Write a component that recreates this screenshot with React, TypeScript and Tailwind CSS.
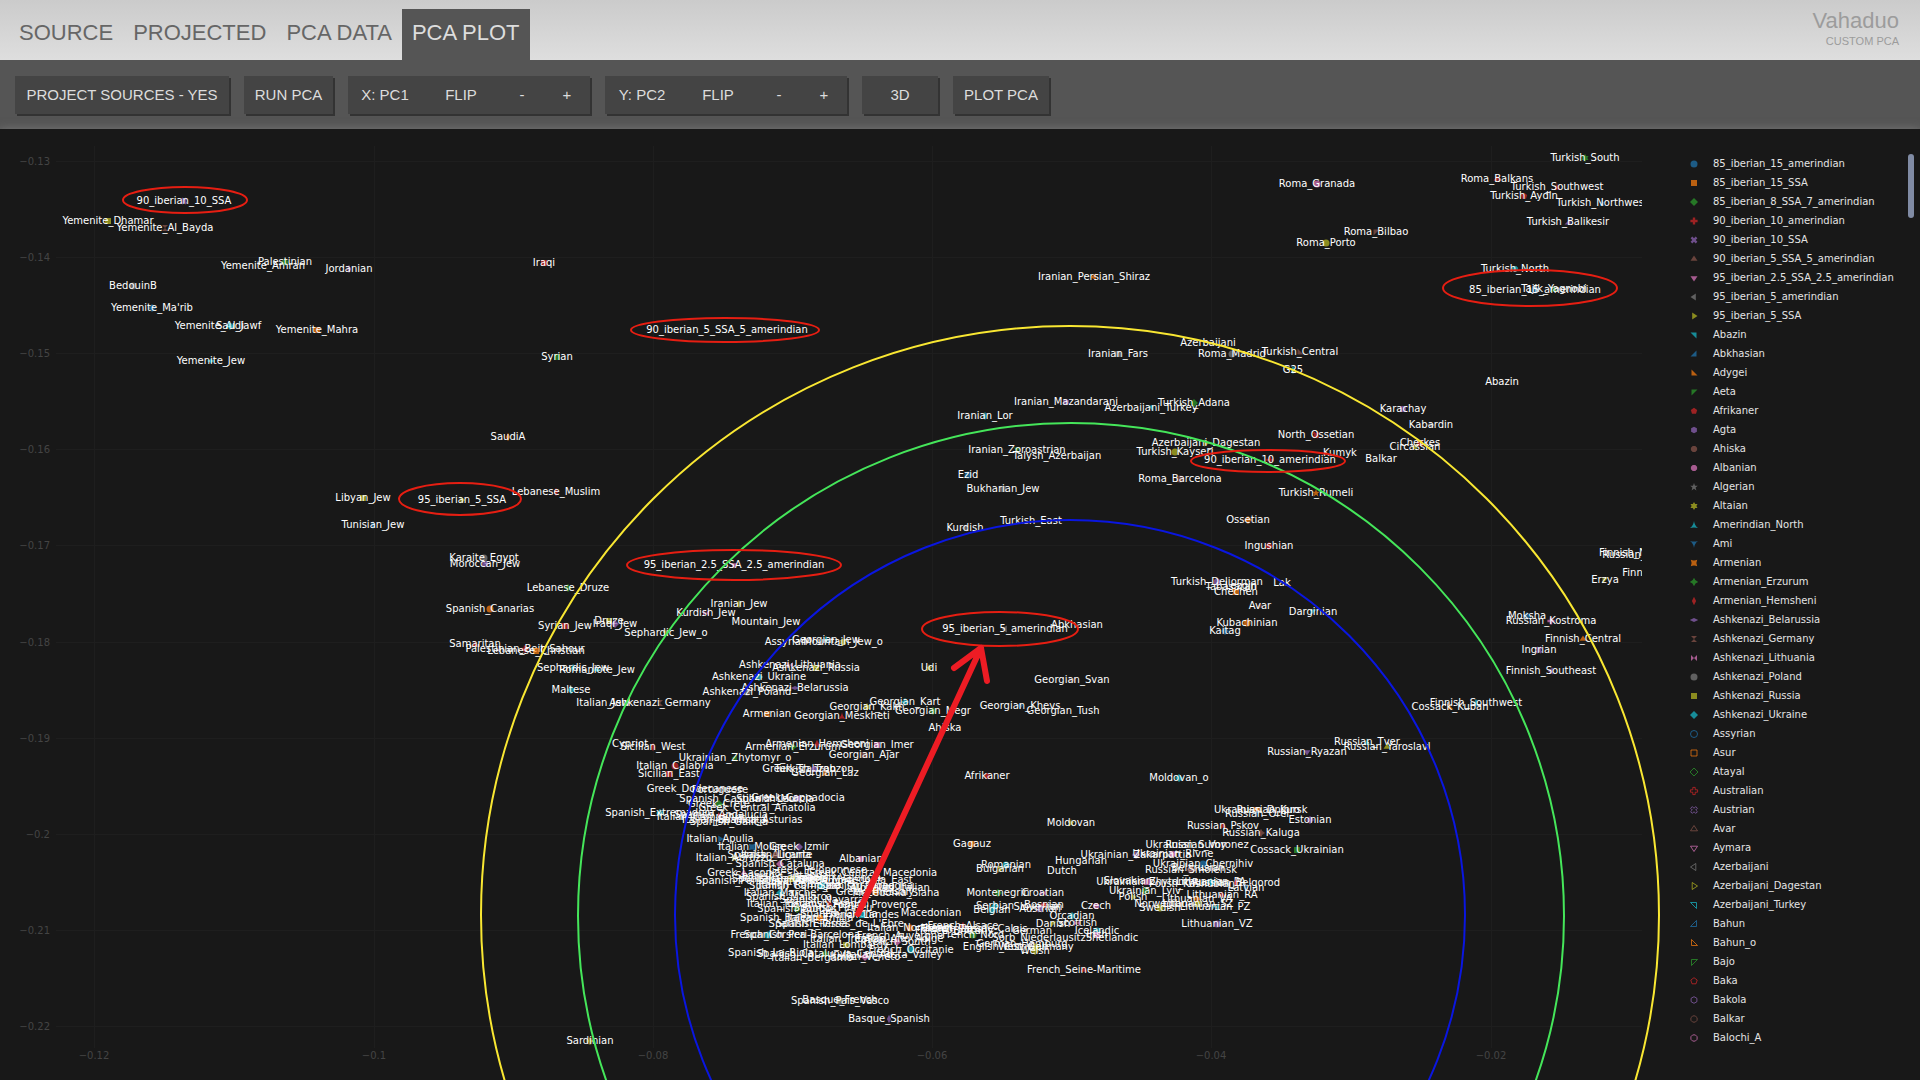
import clsx from "clsx";

type Label = [x: number, y: number, text: string, symbol?: string, color?: number];

const COLORS = [
  "#1f77b4",
  "#ff7f0e",
  "#2ca02c",
  "#d62728",
  "#9467bd",
  "#8c564b",
  "#e377c2",
  "#7f7f7f",
  "#bcbd22",
  "#17becf",
];

const SYMBOLS: Record<string, string> = {
  circle: "M3.5,0A3.5,3.5 0 1,1 -3.5,0A3.5,3.5 0 1,1 3.5,0Z",
  square: "M-3,-3H3V3H-3Z",
  diamond: "M0,-4L4,0L0,4L-4,0Z",
  cross: "M-1.2,-3.6H1.2V-1.2H3.6V1.2H1.2V3.6H-1.2V1.2H-3.6V-1.2H-1.2Z",
  x: "M0,-1.7L1.7,-3.4L3.4,-1.7L1.7,0L3.4,1.7L1.7,3.4L0,1.7L-1.7,3.4L-3.4,1.7L-1.7,0L-3.4,-1.7L-1.7,-3.4Z",
  up: "M-3.5,1.8H3.5L0,-3.5Z",
  down: "M-3.5,-1.8H3.5L0,3.5Z",
  left: "M1.8,-3.5V3.5L-3.5,0Z",
  right: "M-1.8,-3.5V3.5L3.5,0Z",
  ne: "M-3.5,-2.5H2.5V3.5Z",
  se: "M2.5,-3.5V2.5H-3.5Z",
  sw: "M3.5,2.5H-2.5V-3.5Z",
  nw: "M-2.5,3.5V-2.5H3.5Z",
  pentagon: "M0,-3.3L3.2,-1L2,2.8H-2L-3.2,-1Z",
  hexagon: "M0,-3.3L2.9,-1.7V1.7L0,3.3L-2.9,1.7V-1.7Z",
  octagon: "M-1.3,-3.1H1.3L3.1,-1.3V1.3L1.3,3.1H-1.3L-3.1,1.3V-1.3Z",
  star: "M0,-4L1,-1.2H3.8L1.6,0.6L2.4,3.4L0,1.8L-2.4,3.4L-1.6,0.6L-3.8,-1.2H-1Z",
  hexagram: "M0,-4L1.2,-2H3.5L2.4,0L3.5,2H1.2L0,4L-1.2,2H-3.5L-2.4,0L-3.5,-2H-1.2Z",
  starUp: "M0,-4Q0.6,0.6 4,3Q0,1.8 -4,3Q-0.6,0.6 0,-4Z",
  starDown: "M0,4Q0.6,-0.6 4,-3Q0,-1.8 -4,-3Q-0.6,-0.6 0,4Z",
  starSquare: "M-3.2,-3.2Q0,-1.6 3.2,-3.2Q1.6,0 3.2,3.2Q0,1.6 -3.2,3.2Q-1.6,0 -3.2,-3.2Z",
  starDiamond: "M0,-4.2Q0.9,-0.9 4.2,0Q0.9,0.9 0,4.2Q-0.9,0.9 -4.2,0Q-0.9,-0.9 0,-4.2Z",
  tall: "M0,-4.2L2.1,0L0,4.2L-2.1,0Z",
  wide: "M0,-2.1L4.2,0L0,2.1L-4.2,0Z",
  hourglass: "M-3,-3H3L0,0L3,3H-3L0,0Z",
  bowtie: "M-3,-3V3L0,0L3,3V-3L0,0Z",
};

const LEGEND: [name: string, symbol: string, open?: boolean][] = [
  ["85_iberian_15_amerindian", "circle"],
  ["85_iberian_15_SSA", "square"],
  ["85_iberian_8_SSA_7_amerindian", "diamond"],
  ["90_iberian_10_amerindian", "cross"],
  ["90_iberian_10_SSA", "x"],
  ["90_iberian_5_SSA_5_amerindian", "up"],
  ["95_iberian_2.5_SSA_2.5_amerindian", "down"],
  ["95_iberian_5_amerindian", "left"],
  ["95_iberian_5_SSA", "right"],
  ["Abazin", "ne"],
  ["Abkhasian", "se"],
  ["Adygei", "sw"],
  ["Aeta", "nw"],
  ["Afrikaner", "pentagon"],
  ["Agta", "hexagon"],
  ["Ahiska", "octagon"],
  ["Albanian", "octagon"],
  ["Algerian", "star"],
  ["Altaian", "hexagram"],
  ["Amerindian_North", "starUp"],
  ["Ami", "starDown"],
  ["Armenian", "starSquare"],
  ["Armenian_Erzurum", "starDiamond"],
  ["Armenian_Hemsheni", "tall"],
  ["Ashkenazi_Belarussia", "wide"],
  ["Ashkenazi_Germany", "hourglass"],
  ["Ashkenazi_Lithuania", "bowtie"],
  ["Ashkenazi_Poland", "circle"],
  ["Ashkenazi_Russia", "square"],
  ["Ashkenazi_Ukraine", "diamond"],
  ["Assyrian", "circle", true],
  ["Asur", "square", true],
  ["Atayal", "diamond", true],
  ["Australian", "cross", true],
  ["Austrian", "x", true],
  ["Avar", "up", true],
  ["Aymara", "down", true],
  ["Azerbaijani", "left", true],
  ["Azerbaijani_Dagestan", "right", true],
  ["Azerbaijani_Turkey", "ne", true],
  ["Bahun", "se", true],
  ["Bahun_o", "sw", true],
  ["Bajo", "nw", true],
  ["Baka", "pentagon", true],
  ["Bakola", "hexagon", true],
  ["Balkar", "octagon", true],
  ["Balochi_A", "octagon", true],
];

const LABELS: Label[] = [
  [184, 204, "90_iberian_10_SSA", "x", 4],
  [108, 224, "Yemenite_Dhamar", "square", 8],
  [165, 231, "Yemenite_Al_Bayda", "hourglass", 5],
  [263, 269, "Yemenite_Amran"],
  [285, 265, "Palestinian", "diamond", 2],
  [349, 272, "Jordanian", "tall", 4],
  [544, 266, "Iraqi", "square", 3],
  [133, 289, "BedouinB", "circle", 7],
  [152, 311, "Yemenite_Ma'rib", "diamond", 0],
  [218, 329, "Yemenite_Al_Jawf"],
  [230, 329, "Saudi", "diamond", 9],
  [317, 333, "Yemenite_Mahra", "square", 1],
  [211, 364, "Yemenite_Jew", "wide", 9],
  [557, 360, "Syrian", "square", 2],
  [727, 333, "90_iberian_5_SSA_5_amerindian"],
  [1094, 280, "Iranian_Persian_Shiraz", "left", 1],
  [1118, 357, "Iranian_Fars", "square", 7],
  [1585, 161, "Turkish_South", "hexagram", 2],
  [1497, 182, "Roma_Balkans", "up", 3],
  [1557, 190, "Turkish_Southwest", "starUp", 3],
  [1524, 199, "Turkish_Aydin", "pentagon", 3],
  [1602, 206, "Turkish_Northwest", "star", 0],
  [1568, 225, "Turkish_Balikesir", "se", 4],
  [1317, 187, "Roma_Granada", "circle", 6],
  [1376, 235, "Roma_Bilbao", "nw", 5],
  [1326, 246, "Roma_Porto", "circle", 8],
  [1515, 272, "Turkish_North", "octagon", 9],
  [1535, 293, "85_iberian_15_amerindian", "circle", 0],
  [1554, 292, "Tajik_Yagnobi", "starUp", 2],
  [1300, 355, "Turkish_Central", "sw", 5],
  [508, 440, "SaudiA", "tall", 1],
  [363, 501, "Libyan_Jew", "square", 8],
  [462, 503, "95_iberian_5_SSA", "right", 8],
  [556, 495, "Lebanese_Muslim", "tall", 3],
  [373, 528, "Tunisian_Jew", "tall", 0],
  [484, 561, "Karaite_Egypt", "circle", 7],
  [485, 567, "Moroccan_Jew", "hexagon", 4],
  [568, 591, "Lebanese_Druze", "starDiamond", 2],
  [490, 612, "Spanish_Canarias", "circle", 1],
  [565, 629, "Syrian_Jew", "square", 3],
  [609, 624, "Druze", "square", 8],
  [615, 627, "Iraqi_Jew", "diamond", 4],
  [475, 647, "Samaritan", "starUp", 3],
  [525, 652, "Palestinian_Beit_Sahour", "cross", 3],
  [536, 654, "Lebanese_Christian", "square", 1],
  [573, 671, "Sephardic_Jew", "tall", 9],
  [597, 673, "Romaniote_Jew", "wide", 9],
  [571, 693, "Maltese", "diamond", 9],
  [603, 706, "Italian_Jew"],
  [660, 706, "Ashkenazi_Germany", "hourglass", 5],
  [734, 568, "95_iberian_2.5_SSA_2.5_amerindian", "down", 6],
  [739, 607, "Iranian_Jew", "tall", 8],
  [706, 616, "Kurdish_Jew", "bowtie", 6],
  [766, 625, "Mountain_Jew", "pentagon", 7],
  [666, 636, "Sephardic_Jew_o", "star", 8],
  [786, 645, "Assyrian"],
  [826, 643, "Georgian_Jew", "tall", 9],
  [843, 645, "Mountain_Jew_o", "hexagram", 8],
  [790, 668, "Ashkenazi_Lithuania", "bowtie", 6],
  [816, 671, "Ashkenazi_Russia", "square", 8],
  [759, 680, "Ashkenazi_Ukraine", "diamond", 9],
  [795, 691, "Ashkenazi_Belarussia", "wide", 4],
  [747, 695, "Ashkenazi_Poland", "circle", 7],
  [929, 671, "Udi", "star", 8],
  [767, 717, "Armenian", "starSquare", 1],
  [842, 719, "Georgian_Meskheti", "starUp", 3],
  [905, 705, "Georgian_Kart", "cross", 9],
  [867, 710, "Georgian_Kakh", "hexagram", 8],
  [933, 714, "Georgian_Megr", "diamond", 2],
  [945, 731, "Ahiska"],
  [1020, 709, "Georgian_Khevs", "down", 0],
  [1063, 714, "Georgian_Tush"],
  [1072, 683, "Georgian_Svan", "bowtie", 5],
  [630, 747, "Cypriot"],
  [653, 750, "Sicilian_West", "tall", 3],
  [793, 750, "Armenian_Erzurum", "starDiamond", 2],
  [817, 747, "Armenian_Hemsheni", "tall", 3],
  [877, 748, "Georgian_Imer", "square", 6],
  [864, 758, "Georgian_Ajar", "square", 5],
  [735, 761, "Ukrainian_Zhytomyr_o", "left", 2],
  [675, 769, "Italian_Calabria", "circle", 3],
  [669, 777, "Sicilian_East", "square", 3],
  [799, 772, "Greek_Trabzon"],
  [814, 772, "Turkish_Trabzon", "pentagon", 4],
  [825, 776, "Georgian_Laz", "starUp", 1],
  [987, 779, "Afrikaner", "pentagon", 3],
  [1208, 346, "Azerbaijani"],
  [1232, 357, "Roma_Madrid", "circle", 7],
  [1293, 373, "G25", "tall", 9],
  [1066, 405, "Iranian_Mazandarani", "hexagon", 4],
  [1151, 411, "Azerbaijani_Turkey", "ne", 9],
  [1194, 406, "Turkish_Adana", "diamond", 2],
  [985, 419, "Iranian_Lor", "tall", 9],
  [1403, 412, "Karachay", "square", 4],
  [1431, 428, "Kabardin", "wide", 7],
  [1316, 438, "North_Ossetian", "x", 3],
  [1206, 446, "Azerbaijani_Dagestan", "right", 8],
  [1017, 453, "Iranian_Zoroastrian", "starDown", 2],
  [1057, 459, "Talysh_Azerbaijan"],
  [1175, 455, "Turkish_Kayseri", "circle", 8],
  [1270, 463, "90_iberian_10_amerindian", "cross", 3],
  [1340, 456, "Kumyk"],
  [1420, 446, "Cherkes", "square", 3],
  [1415, 450, "Circassian", "left", 8],
  [1381, 462, "Balkar"],
  [968, 478, "Ezid", "circle", 0],
  [1003, 492, "Bukharian_Jew", "square", 7],
  [1180, 482, "Roma_Barcelona", "circle", 5],
  [1316, 496, "Turkish_Rumeli", "star", 1],
  [1248, 523, "Ossetian", "cross", 1],
  [1031, 524, "Turkish_East"],
  [965, 531, "Kurdish", "left", 7],
  [1269, 549, "Ingushian", "diamond", 3],
  [1217, 585, "Turkish_Deliorman", "circle", 4],
  [1282, 586, "Lak"],
  [1231, 590, "Tabasaran"],
  [1241, 589, "Lezgin"],
  [1236, 595, "Chechen", "square", 1],
  [1260, 609, "Avar", "up", 5],
  [1313, 615, "Darginian", "nw", 9],
  [1247, 626, "Kubachinian", "circle", 1],
  [1225, 634, "Kaitag", "diamond", 0],
  [1005, 632, "95_iberian_5_amerindian", "left", 7],
  [1077, 628, "Abkhasian"],
  [1502, 385, "Abazin"],
  [1633, 556, "Finnish_North"],
  [1656, 558, "Russian_Leshukonsky"],
  [1653, 576, "Finnish_East"],
  [1605, 583, "Erzya", "nw", 8],
  [1527, 619, "Moksha", "diamond", 0],
  [1551, 624, "Russian_Kostroma", "cross", 6],
  [1583, 642, "Finnish_Central", "up", 1],
  [1539, 653, "Ingrian", "x", 4],
  [1551, 674, "Finnish_Southeast", "left", 4],
  [1476, 706, "Finnish_Southwest", "tall", 9],
  [1450, 710, "Cossack_Kuban", "sw", 1],
  [1367, 745, "Russian_Tver", "starUp", 9],
  [1387, 750, "Russian_Yaroslavl", "up", 8],
  [1307, 755, "Russian_Ryazan", "down", 4],
  [1179, 781, "Moldovan_o", "diamond", 9],
  [1257, 813, "Ukrainian_Dnipro", "square", 1],
  [1272, 813, "Russian_Kursk"],
  [1257, 817, "Russian_Orel", "starDown", 0],
  [1310, 823, "Estonian", "diamond", 4],
  [1223, 829, "Russian_Pskov", "up", 3],
  [1261, 836, "Russian_Kaluga", "starDiamond", 5],
  [1186, 848, "Ukrainian_Sumy"],
  [1207, 848, "Russian_Voronez"],
  [1297, 853, "Cossack_Ukrainian", "square", 2],
  [1136, 858, "Ukrainian_Zakarpattia", "cross", 4],
  [1173, 857, "Ukrainian_Rivne", "hexagon", 6],
  [1203, 867, "Ukrainian_Chernihiv", "circle", 0],
  [1198, 871, "Belarusian"],
  [1191, 873, "Russian_Smolensk", "circle", 5],
  [1147, 885, "Ukrainian_Zhytomyr", "square", 6],
  [1128, 884, "Slovakian"],
  [1192, 887, "Polish_Kashubian"],
  [1211, 885, "Lithuanian_PA", "diamond", 9],
  [1236, 886, "Russian_Belgorod", "tall", 3],
  [1246, 891, "Latvian", "tall", 0],
  [1145, 894, "Ukrainian_Lyiv", "diamond", 2],
  [1222, 898, "Lithuanian_RA", "up", 3],
  [1133, 900, "Polish", "right", 8],
  [1197, 902, "Lithuanian_VA", "cross", 1],
  [1161, 907, "Norwegian"],
  [1198, 907, "Lithuanian_SZ", "square", 8],
  [1160, 911, "Swedish", "circle", 8],
  [1215, 910, "Lithuanian_PZ", "bowtie", 9],
  [1217, 927, "Lithuanian_VZ", "circle", 4],
  [1071, 826, "Moldovan", "star", 8],
  [972, 847, "Gagauz", "square", 1],
  [1081, 864, "Hungarian"],
  [1006, 868, "Romanian", "circle", 9],
  [1000, 872, "Bulgarian", "right", 8],
  [1062, 874, "Dutch"],
  [998, 896, "Montenegrin", "diamond", 2],
  [1043, 896, "Croatian", "bowtie", 6],
  [995, 909, "Serbian", "diamond", 9],
  [992, 913, "Belgian", "circle", 9],
  [1038, 910, "Slovenian"],
  [1044, 908, "Bosnian", "pentagon", 3],
  [1040, 912, "Austrian", "x", 4],
  [1096, 909, "Czech", "octagon", 6],
  [1072, 919, "Orcadian", "diamond", 9],
  [1053, 927, "Danish", "nw", 8],
  [1077, 926, "Scottish", "bowtie", 6],
  [1097, 934, "Icelandic", "circle", 9],
  [1097, 938, "Irish", "square", 6],
  [1032, 934, "German"],
  [1039, 941, "Sorb_Niederlausitz"],
  [1112, 941, "Shetlandic"],
  [1005, 950, "English_Cornwall"],
  [1022, 947, "German_Hamburg"],
  [1036, 950, "West_Germany", "diamond", 8],
  [1035, 954, "Welsh", "diamond", 8],
  [963, 929, "French_Alsace", "tall", 3],
  [975, 932, "French_Pas-de-Calais"],
  [973, 938, "French_Nord", "circle", 2],
  [951, 932, "French_Paris"],
  [954, 934, "French_Brittany"],
  [1084, 973, "French_Seine-Maritime", "up", 3],
  [931, 916, "Macedonian"],
  [695, 792, "Greek_Dodecanese", "right", 8],
  [720, 793, "Portuguese"],
  [740, 802, "Spanish_Castilla_Y_Leon"],
  [775, 802, "Spanish_Murcia"],
  [798, 801, "Greek_Cappadocia", "x", 4],
  [719, 807, "Greek_Crete", "diamond", 2],
  [757, 811, "Greek_Central_Anatolia"],
  [660, 816, "Spanish_Extremadura", "diamond", 9],
  [700, 820, "Italian_Campania"],
  [721, 818, "Spanish_Andalucia", "bowtie", 3],
  [760, 823, "Spanish_Asturias"],
  [729, 825, "Spanish_Galicia"],
  [724, 823, "Italian_Basilicata"],
  [720, 842, "Italian_Apulia", "right", 0],
  [752, 850, "Italian_Molise", "starSquare", 0],
  [799, 850, "Greek_Izmir", "diamond", 4],
  [734, 861, "Italian_Abruzzo", "star", 8],
  [770, 858, "Spanish_Alicante"],
  [776, 858, "Italian_Liguria", "circle", 5],
  [780, 867, "Spanish_Cataluna", "diamond", 6],
  [861, 862, "Albanian", "octagon", 6],
  [744, 876, "Greek_Laconia", "up", 6],
  [818, 873, "Greek_Peloponnese"],
  [872, 876, "Greek_Central_Macedonia"],
  [739, 884, "Spanish_Penedes"],
  [774, 882, "Spanish_Castello"],
  [792, 882, "Italian_Umbria", "square", 8],
  [782, 879, "Spanish_Cantabria"],
  [812, 884, "Spanish_Zamora"],
  [838, 881, "Spanish_Valencia"],
  [855, 883, "Greek_Macedonia_East"],
  [800, 888, "Italian_Romagna"],
  [822, 889, "Spanish_Camp_de_Tarragona", "circle", 9],
  [866, 889, "Spanish_Tarragona"],
  [780, 896, "Italian_Marche", "diamond", 9],
  [875, 895, "Greek_Thessaly", "circle", 1],
  [890, 891, "Albanian_Italian"],
  [896, 896, "Macedonia_Siana"],
  [789, 900, "Spanish_Mallorca"],
  [822, 903, "Spanish_Navarra"],
  [785, 907, "Italian_Tuscany"],
  [829, 907, "Spanish_Aragon", "right", 3],
  [875, 908, "French_Provence"],
  [797, 912, "Spanish_Burgos", "diamond", 2],
  [833, 911, "Spanish_Pirineu"],
  [784, 921, "Spanish_Baleares"],
  [820, 921, "Italian_Emilia", "circle", 1],
  [839, 917, "Spanish_Girona"],
  [862, 918, "French_Landes", "square", 9],
  [808, 927, "Spanish_Eivissa"],
  [840, 927, "Spanish_Terres_de_L'Ebre"],
  [910, 931, "Italian_Northeast", "circle", 1],
  [900, 939, "French_Auvergne"],
  [768, 938, "French_Corsica", "circle", 9],
  [802, 938, "Spanish_Peri-Barcelona"],
  [848, 942, "Italian_Trentino"],
  [897, 945, "French_South", "diamond", 6],
  [899, 942, "Italian_Alto_Adige"],
  [846, 948, "Italian_Lombardy", "square", 8],
  [911, 953, "French_Occitanie", "circle", 9],
  [771, 956, "Spanish_La_Rioja"],
  [825, 957, "Spanish_Catalunya_Central", "diamond", 2],
  [812, 961, "Italian_Bergamo"],
  [865, 960, "Italian_Veneto", "diamond", 6],
  [893, 958, "Italian_Aosta_Valley"],
  [840, 1003, "Basque_French", "right", 8],
  [840, 1004, "Spanish_Pais_Vasco", "circle", 7],
  [889, 1022, "Basque_Spanish", "tall", 4],
  [590, 1044, "Sardinian", "cross", 8],
];

const Y_TICKS: [string, number][] = [
  ["−0.13", 162],
  ["−0.14", 258],
  ["−0.15", 354],
  ["−0.16", 450],
  ["−0.17", 546],
  ["−0.18", 643],
  ["−0.19", 739],
  ["−0.2", 835],
  ["−0.21", 931],
  ["−0.22", 1027],
];

const X_TICKS: [string, number][] = [
  ["−0.12", 94],
  ["−0.1", 374],
  ["−0.08", 653],
  ["−0.06", 932],
  ["−0.04", 1211],
  ["−0.02", 1491],
];

// cx, cy, rx, ry
const HIGHLIGHTS = [
  [185, 200, 62, 13],
  [725, 330, 94, 12],
  [1530, 288, 87, 18],
  [460, 499, 61, 16],
  [734, 565, 107, 15],
  [1268, 461, 77, 11],
  [1000, 629, 78, 17],
];

const TABS = ["SOURCE", "PROJECTED", "PCA DATA", "PCA PLOT"];

const Marker = ({ symbol, color, open }: { symbol: string; color: number; open?: boolean }) => (
  <path
    d={SYMBOLS[symbol]}
    fill={open ? "none" : COLORS[color]}
    stroke={open ? COLORS[color] : "none"}
    opacity={0.7}
  />
);

const AxisGroup = ({ axis }: { axis: string }) => (
  <div className="flex h-[38px] bg-[#444] shadow-[2px_2px_0_#333]">
    <button className="w-[74px]">{axis}</button>
    <button className="w-[78px]">FLIP</button>
    <button className="w-11">-</button>
    <button className="w-[46px]">+</button>
  </div>
);

const ToolButton = ({ children, className }: { children: string; className: string }) => (
  <button className={clsx("h-[38px] bg-[#444] whitespace-nowrap shadow-[2px_2px_0_#333]", className)}>
    {children}
  </button>
);

const Plot = () => (
  <svg
    viewBox="0 129 1642 951"
    className="block min-w-0 flex-1 overflow-visible font-['DejaVu_Sans',Verdana,sans-serif] text-[10px]"
    role="img"
    aria-label="PCA plot"
  >
    <clipPath id="plot-area">
      <rect x="56" y="146" width="1586" height="903" />
    </clipPath>
    <g stroke="#1e1e1e">
      {Y_TICKS.map(([t, y]) => (
        <line key={t} x1="56" x2="1642" y1={y - 0.5} y2={y - 0.5} />
      ))}
      {X_TICKS.map(([t, x]) => (
        <line key={t} x1={x + 0.5} x2={x + 0.5} y1="146" y2="1048" />
      ))}
    </g>
    <g fill="#444">
      {Y_TICKS.map(([t, y]) => (
        <text key={t} x="50" y={y + 3} textAnchor="end">
          {t}
        </text>
      ))}
      {X_TICKS.map(([t, x]) => (
        <text key={t} x={x} y="1059" textAnchor="middle">
          {t}
        </text>
      ))}
    </g>
    <g clipPath="url(#plot-area)">
      {LABELS.map(([x, y, text, symbol, color]) => (
        <g key={text}>
          {symbol && (
            <g transform={`translate(${x} ${y - 3})`}>
              <Marker symbol={symbol} color={color ?? 0} />
            </g>
          )}
          <text x={x} y={y} fill="#fff" textAnchor="middle">
            {text}
          </text>
        </g>
      ))}
    </g>
    <g fill="none" strokeWidth="2">
      <circle cx="1070" cy="915" r="589" stroke="#f9e732" />
      <circle cx="1071" cy="916" r="493" stroke="#45e65a" />
      <circle cx="1070" cy="915" r="395" stroke="#0a16e0" />
      {HIGHLIGHTS.map(([cx, cy, rx, ry]) => (
        <ellipse key={cx} cx={cx} cy={cy} rx={rx} ry={ry} stroke="#e61e12" />
      ))}
    </g>
    <path
      d="M858 914L981 648M954 668L981 648L987 681"
      fill="none"
      stroke="#ed1c24"
      strokeWidth="6"
      strokeLinecap="round"
      strokeLinejoin="round"
    />
  </svg>
);

const Legend = () => (
  <aside className="flex w-[278px] shrink-0 items-start justify-between pt-[25px] pr-1.5 pl-[45px]">
    <ul className="font-['DejaVu_Sans',Verdana,sans-serif] text-[10px] text-[#e4e4e4]">
      {LEGEND.map(([name, symbol, open], i) => (
        <li key={name} className="flex h-[19px] items-center gap-3">
          <svg viewBox="-7 -7 14 14" className="h-3.5 w-3.5 shrink-0 overflow-visible">
            <Marker symbol={symbol} color={i % 10} open={open} />
          </svg>
          <span className="whitespace-nowrap">{name}</span>
        </li>
      ))}
    </ul>
    <div className="h-16 w-1.5 shrink-0 rounded-full bg-[#808ba4]" />
  </aside>
);

const App = () => {
  return (
    <div className="flex min-h-screen flex-col overflow-hidden bg-[#181818] font-['Liberation_Sans',Arial,sans-serif]">
      <header className="flex h-[60px] items-end justify-between bg-linear-to-b from-[#cbcbcb] to-[#dedede] pr-[21px] pl-[9px]">
        <nav className="flex">
          {TABS.map((tab) => (
            <button
              key={tab}
              className={clsx(
                "h-[51px] px-2.5 pb-1 text-[22px]",
                tab === "PCA PLOT" ? "bg-[#555] text-[#ddd]" : "text-[#666]",
              )}
            >
              {tab}
            </button>
          ))}
        </nav>
        <div className="self-start pt-2 text-right text-[#9c9c9c]">
          <div className="text-[22px] leading-[26px]">Vahaduo</div>
          <div className="text-[11px] leading-[14px]">CUSTOM PCA</div>
        </div>
      </header>
      <div className="flex h-[69px] gap-[15px] bg-[#555] px-[15px] pt-4 text-[15px] text-[#ddd]">
        <ToolButton className="w-[214px]">PROJECT SOURCES - YES</ToolButton>
        <ToolButton className="w-[89px]">RUN PCA</ToolButton>
        <AxisGroup axis="X: PC1" />
        <AxisGroup axis="Y: PC2" />
        <ToolButton className="w-[76px]">3D</ToolButton>
        <ToolButton className="w-24">PLOT PCA</ToolButton>
      </div>
      <main className="flex flex-1 items-start overflow-hidden bg-[#181818] shadow-[0_0_8px_#777]">
        <Plot />
        <Legend />
      </main>
    </div>
  );
};

export default App;
